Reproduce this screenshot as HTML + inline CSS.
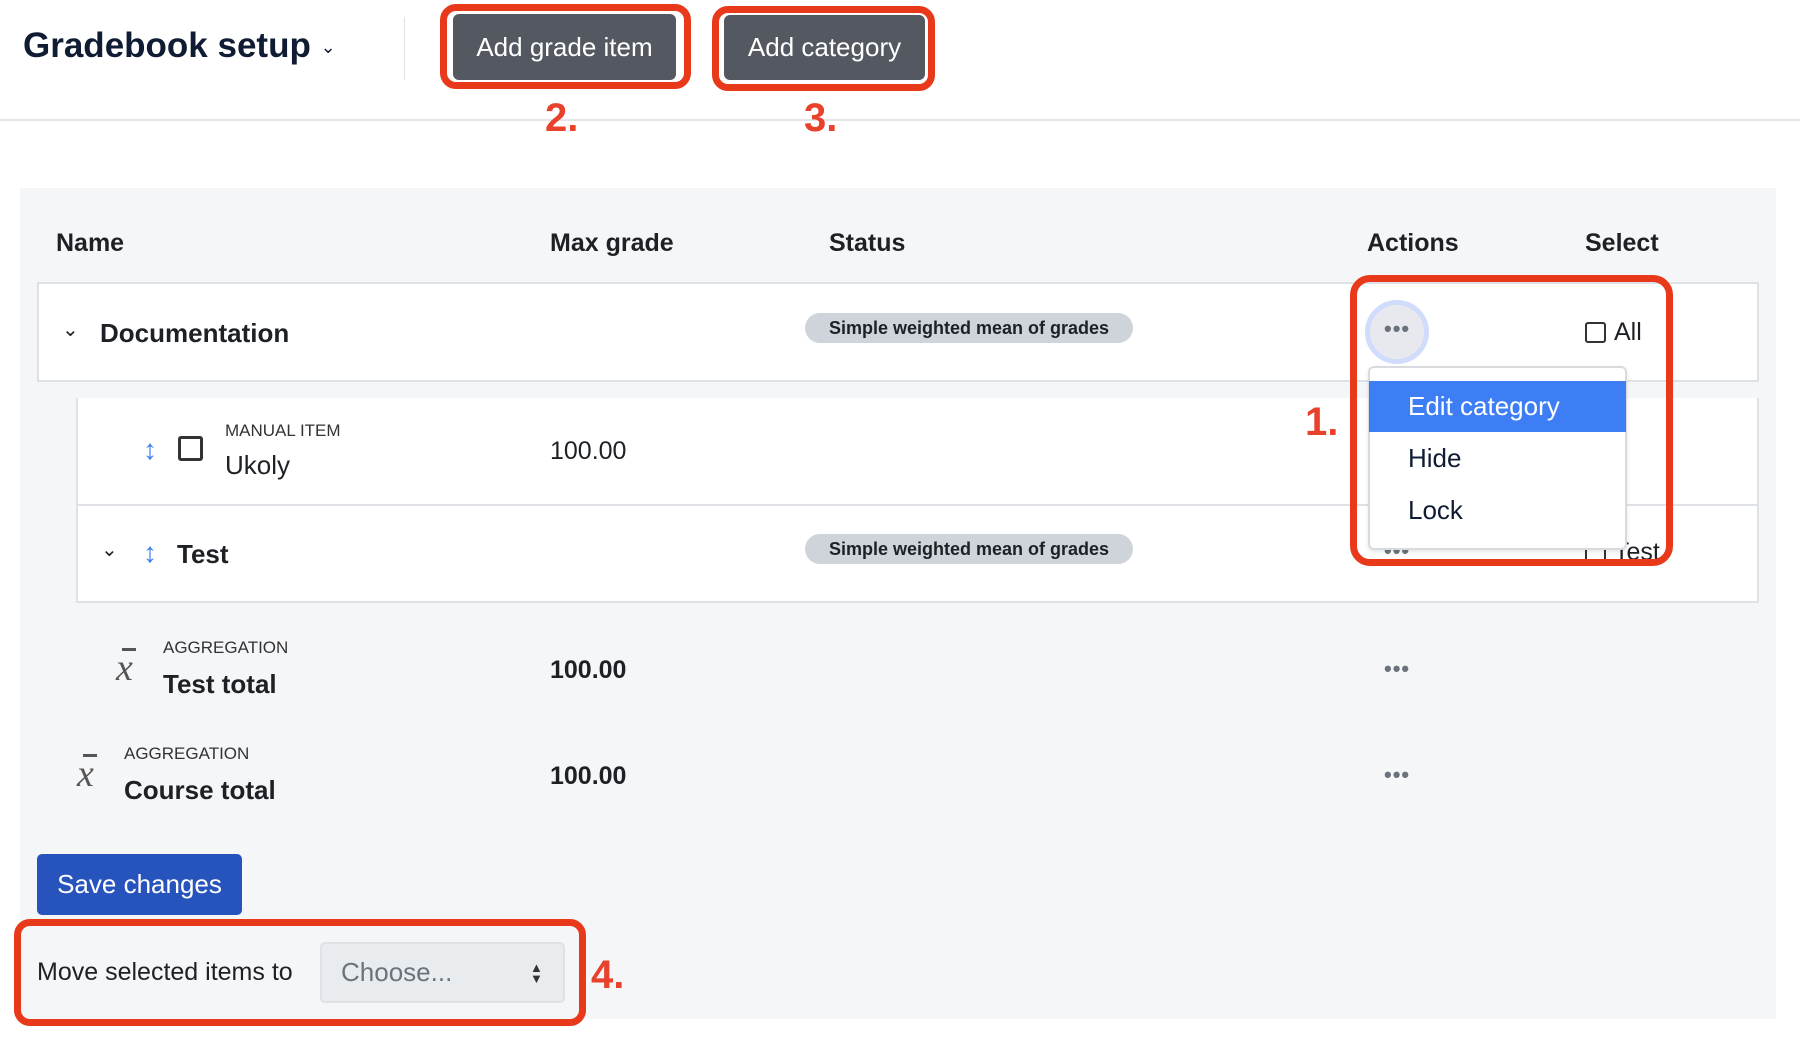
<!DOCTYPE html>
<html><head><meta charset="utf-8"><style>
*{box-sizing:border-box;margin:0;padding:0}
body{width:1800px;height:1043px;background:#fff;font-family:"Liberation Sans",sans-serif;color:#1d2125;position:relative;overflow:hidden}
.a{position:absolute;white-space:nowrap}
.btn{position:absolute;background:#545860;color:#fff;font-size:26px;border-radius:6px;display:flex;align-items:center;justify-content:center}
.red{position:absolute;border:7px solid #e8391b;border-radius:16px}
.num{position:absolute;color:#e8412c;font-weight:bold;font-size:40px}
.row{position:absolute;background:#fff;border:2px solid #dee2e6}
.badge{position:absolute;background:#ced4da;border-radius:16px;font-size:18px;font-weight:bold;display:flex;align-items:center;justify-content:center;color:#1d2125}
.dots{position:absolute;color:#6a737b;font-size:22px;font-weight:bold;letter-spacing:1px}
.cb{position:absolute;border:2px solid #333;border-radius:3px;background:#fff}
.xb{position:absolute;font-family:"Liberation Serif",serif;font-style:italic;font-size:38px;color:#555}
.xb:before{content:"";position:absolute;left:6px;top:2px;width:14px;height:3px;background:#555}
</style></head><body>
<div class="a" style="left:23px;top:26px;font-size:35px;font-weight:bold;color:#0f1c33">Gradebook setup <span style="font-size:18px;font-weight:normal;position:relative;top:-4px">&#8964;</span></div>
<div class="a" style="left:404px;top:17px;width:1px;height:63px;background:#dee2e6"></div>
<div class="a" style="left:0;top:119px;width:1800px;height:2px;background:#e3e5e8"></div>

<div class="red" style="left:440px;top:4px;width:251px;height:85px"></div>
<div class="btn" style="left:453px;top:14px;width:223px;height:66px">Add grade item</div>
<div class="red" style="left:712px;top:6px;width:223px;height:85px"></div>
<div class="btn" style="left:724px;top:15px;width:201px;height:65px">Add category</div>
<div class="num" style="left:545px;top:96px">2.</div>
<div class="num" style="left:804px;top:96px">3.</div>

<div class="a" style="left:20px;top:188px;width:1756px;height:831px;background:#f5f6f8"></div>
<div class="a" style="left:56px;top:229px;font-size:25px;font-weight:bold">Name</div>
<div class="a" style="left:550px;top:229px;font-size:25px;font-weight:bold">Max grade</div>
<div class="a" style="left:829px;top:229px;font-size:25px;font-weight:bold">Status</div>
<div class="a" style="left:1367px;top:229px;font-size:25px;font-weight:bold">Actions</div>
<div class="a" style="left:1585px;top:229px;font-size:25px;font-weight:bold">Select</div>

<div class="row" style="left:37px;top:282px;width:1722px;height:100px"></div>
<div class="a" style="left:62px;top:317px;font-size:20px">&#8964;</div>
<div class="a" style="left:100px;top:318px;font-size:26px;font-weight:bold">Documentation</div>
<div class="badge" style="left:805px;top:313px;width:328px;height:30px">Simple weighted mean of grades</div>
<div class="a" style="left:1365px;top:300px;width:64px;height:64px;border-radius:50%;background:#e7e9ee;border:5px solid #cfdcfb"></div>
<div class="dots" style="left:1384px;top:316px">•••</div>
<div class="cb" style="left:1585px;top:322px;width:21px;height:21px"></div>
<div class="a" style="left:1614px;top:318px;font-size:25px">All</div>

<div class="row" style="left:76px;top:398px;width:1683px;height:106px;border-top:none;border-bottom:none"></div>
<div class="a" style="left:143px;top:434px;color:#3b7df0;font-size:28px;font-weight:bold">&#8597;</div>
<div class="cb" style="left:178px;top:436px;width:25px;height:25px;border-width:3px"></div>
<div class="a" style="left:225px;top:421px;font-size:17px;color:#333">MANUAL ITEM</div>
<div class="a" style="left:225px;top:450px;font-size:26px">Ukoly</div>
<div class="a" style="left:550px;top:437px;font-size:25px">100.00</div>

<div class="row" style="left:76px;top:504px;width:1683px;height:99px"></div>
<div class="a" style="left:101px;top:537px;font-size:20px">&#8964;</div>
<div class="a" style="left:143px;top:537px;color:#3b7df0;font-size:28px;font-weight:bold">&#8597;</div>
<div class="a" style="left:177px;top:539px;font-size:26px;font-weight:bold">Test</div>
<div class="badge" style="left:805px;top:534px;width:328px;height:30px">Simple weighted mean of grades</div>
<div class="dots" style="left:1384px;top:538px">•••</div>
<div class="cb" style="left:1585px;top:544px;width:21px;height:21px"></div>
<div class="a" style="left:1614px;top:538px;font-size:25px">Test</div>

<div class="xb" style="left:116px;top:646px">x</div>
<div class="a" style="left:163px;top:638px;font-size:17px;color:#333">AGGREGATION</div>
<div class="a" style="left:163px;top:669px;font-size:26px;font-weight:bold">Test total</div>
<div class="a" style="left:550px;top:656px;font-size:25px;font-weight:bold">100.00</div>
<div class="dots" style="left:1384px;top:656px">•••</div>

<div class="xb" style="left:77px;top:752px">x</div>
<div class="a" style="left:124px;top:744px;font-size:17px;color:#333">AGGREGATION</div>
<div class="a" style="left:124px;top:775px;font-size:26px;font-weight:bold">Course total</div>
<div class="a" style="left:550px;top:762px;font-size:25px;font-weight:bold">100.00</div>
<div class="dots" style="left:1384px;top:762px">•••</div>

<div class="a" style="left:37px;top:854px;width:205px;height:61px;background:#2753bd;border-radius:5px;color:#fff;font-size:26px;display:flex;align-items:center;justify-content:center">Save changes</div>

<div class="red" style="left:14px;top:919px;width:572px;height:107px"></div>
<div class="a" style="left:37px;top:958px;font-size:25px">Move selected items to</div>
<div class="a" style="left:320px;top:942px;width:245px;height:61px;background:#e9ecef;border:2px solid #dee2e6;border-radius:5px"></div>
<div class="a" style="left:341px;top:957px;font-size:26px;color:#6a737b">Choose...</div>
<div class="a" style="left:530px;top:962px;font-size:13px;line-height:11px;color:#333">▲<br>▼</div>
<div class="num" style="left:591px;top:953px">4.</div>

<div class="a" style="left:1368px;top:366px;width:259px;height:184px;background:#fff;border:2px solid #d8dade;border-radius:6px;box-shadow:0 2px 4px rgba(0,0,0,.1)"></div>
<div class="a" style="left:1369px;top:381px;width:257px;height:51px;background:#3d7ef5"></div>
<div class="a" style="left:1408px;top:391px;font-size:26px;color:#fff">Edit category</div>
<div class="a" style="left:1408px;top:443px;font-size:26px;color:#0f1c33">Hide</div>
<div class="a" style="left:1408px;top:495px;font-size:26px;color:#0f1c33">Lock</div>
<div class="red" style="left:1350px;top:275px;width:323px;height:291px;border-radius:20px"></div>
<div class="num" style="left:1305px;top:400px">1.</div>
</body></html>
